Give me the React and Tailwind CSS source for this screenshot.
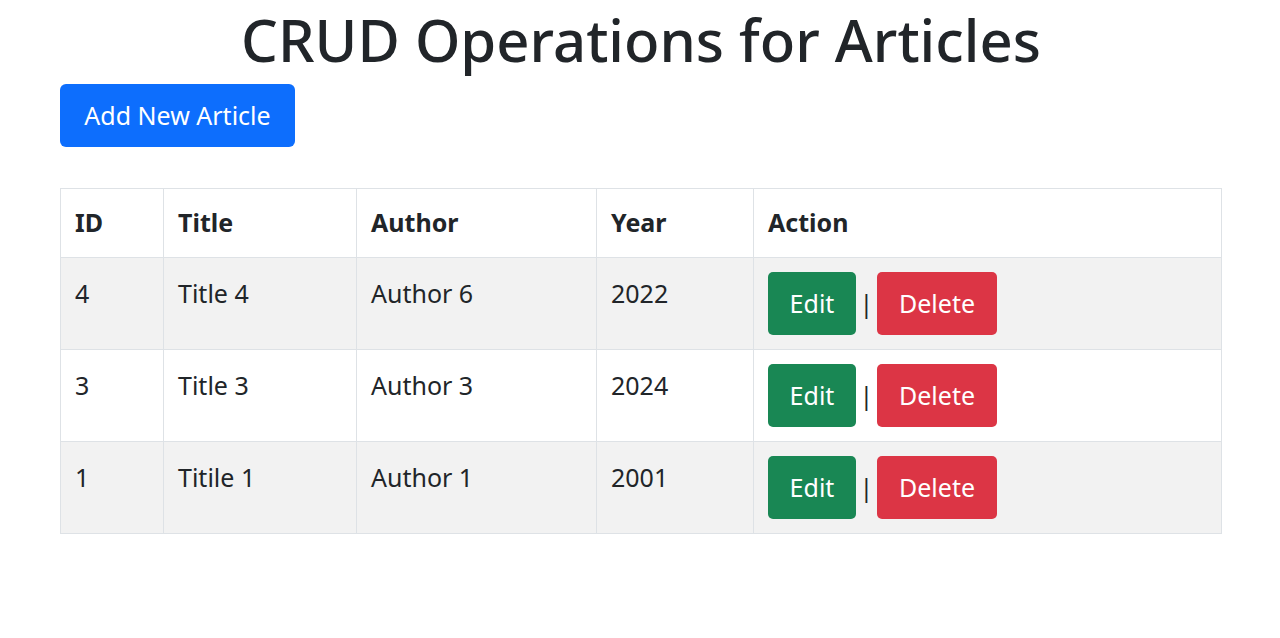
export default function App() {
  const rows = [
    { id: 4, title: "Title 4", author: "Author 6", year: 2022 },
    { id: 3, title: "Title 3", author: "Author 3", year: 2024 },
    { id: 1, title: "Titile 1", author: "Author 1", year: 2001 },
  ];
  return (
    <div
      className="min-h-[638px] bg-white text-[#212529]"
      style={{ fontFamily: '"Noto Sans", "Open Sans", sans-serif' }}
    >
      <div className="w-[1162px] ml-[60px]">
        <h1 className="text-center text-[58px] font-medium leading-[80px] h-[84px] tracking-normal">
          CRUD Operations for Articles
        </h1>
        <button className="h-[63px] w-[235px] rounded-[6px] bg-[#0d6efd] text-white text-[25px] leading-none">
          Add New Article
        </button>
        <table className="mt-[41px] w-full border-collapse border border-[#dee2e6] text-[25px]">
          <colgroup>
            <col className="w-[103px]" />
            <col className="w-[193px]" />
            <col className="w-[240px]" />
            <col className="w-[157px]" />
            <col />
          </colgroup>
          <thead>
            <tr className="h-[69px]">
              {["ID", "Title", "Author", "Year", "Action"].map((h) => (
                <th
                  key={h}
                  className="border border-[#dee2e6] px-[14px] text-left font-bold align-middle"
                >
                  {h}
                </th>
              ))}
            </tr>
          </thead>
          <tbody>
            {rows.map((r, i) => (
              <tr
                key={r.id}
                className={i % 2 === 0 ? "bg-[#f2f2f2] h-[92px]" : "bg-white h-[92px]"}
              >
                <td className="border border-[#dee2e6] px-[14px] pt-[17px] align-top leading-[36px]">{r.id}</td>
                <td className="border border-[#dee2e6] px-[14px] pt-[17px] align-top leading-[36px]">{r.title}</td>
                <td className="border border-[#dee2e6] px-[14px] pt-[17px] align-top leading-[36px]">{r.author}</td>
                <td className="border border-[#dee2e6] px-[14px] pt-[17px] align-top leading-[36px]">{r.year}</td>
                <td className="border border-[#dee2e6] px-[14px] align-middle">
                  <div className="flex items-center">
                    <button className="h-[63px] w-[88px] rounded-[5px] bg-[#198754] text-white text-[25px] leading-none">
                      Edit
                    </button>
                    <span className="w-[21px] text-center text-[25px] leading-none">|</span>
                    <button className="h-[63px] w-[120px] rounded-[5px] bg-[#dc3545] text-white text-[25px] leading-none">
                      Delete
                    </button>
                  </div>
                </td>
              </tr>
            ))}
          </tbody>
        </table>
      </div>
    </div>
  );
}
